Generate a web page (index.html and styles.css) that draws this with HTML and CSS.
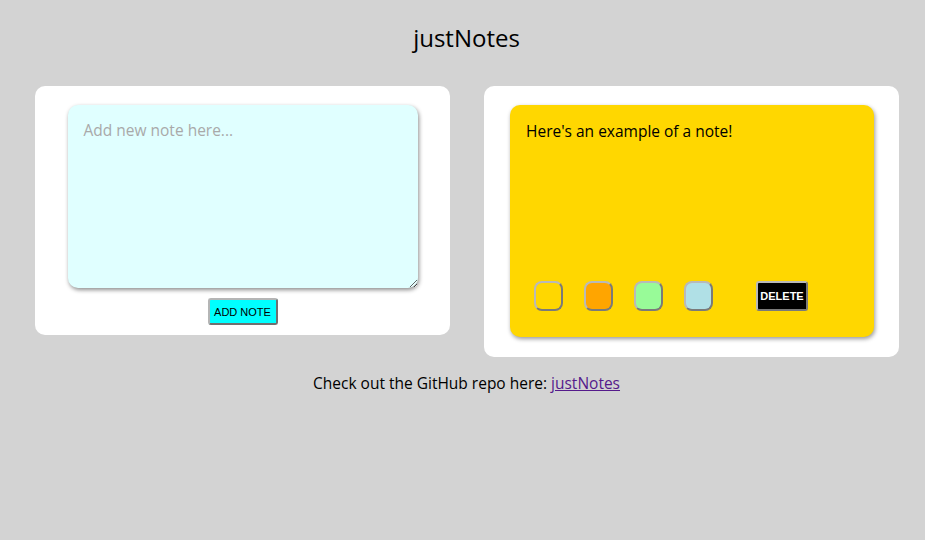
FILE: index.html
```html
<!DOCTYPE html>
<html>
<head>
<meta charset="utf-8">
<link rel="stylesheet" href="styles.css">
<title>justNotes</title>
</head>
<body>
<h1 class="title">justNotes</h1>
<div class="cards">
  <div class="card card-new">
    <textarea class="new-note" placeholder="Add new note here..."></textarea>
    <button class="add-btn">ADD NOTE</button>
  </div>
  <div class="card card-notes">
    <div class="note">
      <p class="note-text">Here's an example of a note!</p>
      <div class="note-controls">
        <button class="swatch swatch-gold"></button>
        <button class="swatch swatch-orange"></button>
        <button class="swatch swatch-green"></button>
        <button class="swatch swatch-blue"></button>
        <button class="delete-btn">DELETE</button>
      </div>
    </div>
  </div>
</div>
<p class="footer">Check out the GitHub repo here: <a class="repo-link" href="#">justNotes</a></p>
</body>
</html>
```
FILE: styles.css
```css
html, body {
  margin: 0;
  padding: 0;
}
body {
  background: #d3d3d3;
  font-family: "Open Sans", "Noto Sans", sans-serif;
  color: #000;
  width: 925px;
  height: 540px;
  overflow: hidden;
}
.title {
  margin: 0;
  padding: 22px 0 0 8px;
  height: 86px;
  box-sizing: border-box;
  text-align: center;
  font-size: 24px;
  font-weight: 400;
  line-height: 32px;
}
.cards {
  display: flex;
  align-items: flex-start;
  gap: 34px;
  padding-left: 35px;
}
.card {
  background: #fff;
  border-radius: 10px;
  width: 415px;
  box-sizing: border-box;
}
.card-new {
  display: flex;
  flex-direction: column;
  align-items: center;
  padding: 19px 0 10px;
}
.new-note {
  width: 350px;
  height: 183px;
  box-sizing: border-box;
  border: none;
  border-radius: 10px;
  background: #e0ffff;
  box-shadow: 1px 2px 4px rgba(0, 0, 0, 0.45);
  padding: 14px 16px;
  font-family: inherit;
  font-size: 15.5px;
  outline: none;
}
.new-note::placeholder {
  color: #a9a9a9;
}
.add-btn {
  margin-top: 10px;
  width: 70px;
  height: 27px;
  padding: 0;
  background: #00ffff;
  border: 2px solid;
  border-color: #b5b5b5 #707070 #707070 #b5b5b5;
  border-radius: 3px;
  font-family: "Liberation Sans", Arial, sans-serif;
  font-size: 11px;
  color: #000;
}
.card-notes {
  padding: 19px 25px 20px 26px;
}
.note {
  width: 364px;
  height: 232px;
  box-sizing: border-box;
  background: #ffd700;
  border-radius: 10px;
  box-shadow: 1px 2px 4px rgba(0, 0, 0, 0.4);
  padding: 14px 16px 26px 24px;
  display: flex;
  flex-direction: column;
}
.note-text {
  margin: 0 0 0 -8px;
  flex: 1;
  font-size: 15.5px;
  line-height: 24px;
}
.note-controls {
  display: flex;
  align-items: center;
}
.swatch {
  width: 29px;
  height: 30px;
  margin-right: 21px;
  padding: 0;
  border: 2px solid;
  border-color: #b9b9b9 #7a7a7a #7a7a7a #b9b9b9;
  border-radius: 8px;
}
.swatch-gold { background: #ffd700; }
.swatch-orange { background: #ffa500; }
.swatch-green { background: #98fb98; }
.swatch-blue { background: #b0e0e6; }
.delete-btn {
  margin-left: 22px;
  width: 52px;
  height: 30px;
  padding: 0;
  background: #000;
  color: #fff;
  border: 2px solid;
  border-color: #b9b9b9 #7a7a7a #7a7a7a #b9b9b9;
  border-radius: 3px;
  font-family: "Liberation Sans", Arial, sans-serif;
  font-weight: 700;
  font-size: 11px;
}
.footer {
  margin: 14px 0 0;
  padding-left: 8px;
  text-align: center;
  font-size: 15.5px;
  line-height: 24px;
}
.repo-link {
  color: #551a8b;
}
```
